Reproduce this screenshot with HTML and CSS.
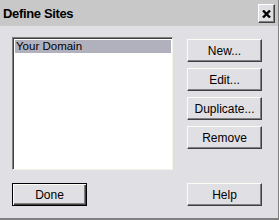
FILE: index.html
```html
<!DOCTYPE html>
<html>
<head>
<meta charset="utf-8">
<link rel="stylesheet" href="styles.css">
</head>
<body>
<div class="window">
  <div class="titlebar">
    <span class="title">Define Sites</span>
    <button class="close" aria-label="Close">
      <svg width="9" height="8" viewBox="0 0 9 8"><path d="M1 0.5L8 7.5M8 0.5L1 7.5" stroke="#000" stroke-width="2.4" fill="none"/></svg>
    </button>
  </div>
  <div class="content">
    <div class="main">
      <div class="listbox">
        <div class="item selected">Your Domain</div>
      </div>
      <div class="side">
        <button class="btn">New...</button>
        <button class="btn">Edit...</button>
        <button class="btn">Duplicate...</button>
        <button class="btn">Remove</button>
      </div>
    </div>
    <div class="bottom">
      <button class="btn default">Done</button>
      <button class="btn">Help</button>
    </div>
  </div>
</div>
</body>
</html>
```
FILE: styles.css
```css
html, body {
  margin: 0;
  padding: 0;
  background: #e0dfe3;
}
.window {
  width: 279px;
  height: 220px;
  box-sizing: border-box;
  border-right: 1px solid #808080;
  border-bottom: 2px solid #808080;
  background: #e0dfe3;
  display: flex;
  flex-direction: column;
  font-family: "Liberation Sans", Arial, sans-serif;
}
.titlebar {
  height: 26px;
  background: #c8c8c8;
  display: flex;
  align-items: center;
  justify-content: space-between;
  padding: 0 3px 0 3px;
}
.title {
  font-weight: bold;
  font-size: 13px;
  letter-spacing: -0.35px;
  color: #000;
  margin-top: 1px;
}
.close {
  width: 17px;
  height: 19px;
  padding: 0;
  margin: 1px 0 0 0;
  box-sizing: border-box;
  background: #e0dfe3;
  border: 1px solid;
  border-color: #fff #404040 #404040 #fff;
  box-shadow: inset -1px -1px #808080;
  display: flex;
  align-items: center;
  justify-content: center;
}
.content {
  padding: 11px 0 0 12px;
  display: flex;
  flex-direction: column;
}
.main {
  display: flex;
  gap: 14px;
}
.listbox {
  width: 161px;
  height: 133px;
  box-sizing: border-box;
  background: #fff;
  border: 1px solid;
  border-color: #808080 #f4f3e8 #f4f3e8 #808080;
  box-shadow: inset 1px 1px #404040;
  padding: 2px 1px 0 2px;
}
.item {
  height: 13px;
  line-height: 13px;
  font-size: 11.5px;
  padding-left: 1px;
  color: #000;
}
.item.selected {
  background: #b1b1bd;
}
.side {
  display: flex;
  flex-direction: column;
  gap: 6px;
  padding-top: 2px;
}
.btn {
  width: 75px;
  height: 23px;
  box-sizing: border-box;
  padding: 0;
  margin: 0;
  background: #e0dfe3;
  border: 1px solid;
  border-color: #fcfcf4 #404040 #404040 #fcfcf4;
  box-shadow: inset -1px -1px #808080;
  font-family: "Liberation Sans", Arial, sans-serif;
  font-size: 12px;
  color: #000;
}
.btn.default {
  border: 1px solid #000;
  box-shadow: inset 1px 1px #fcfcf4, inset -1px -1px #404040, inset -2px -2px #808080;
}
.bottom {
  display: flex;
  gap: 100px;
  margin-top: 13px;
}
```
